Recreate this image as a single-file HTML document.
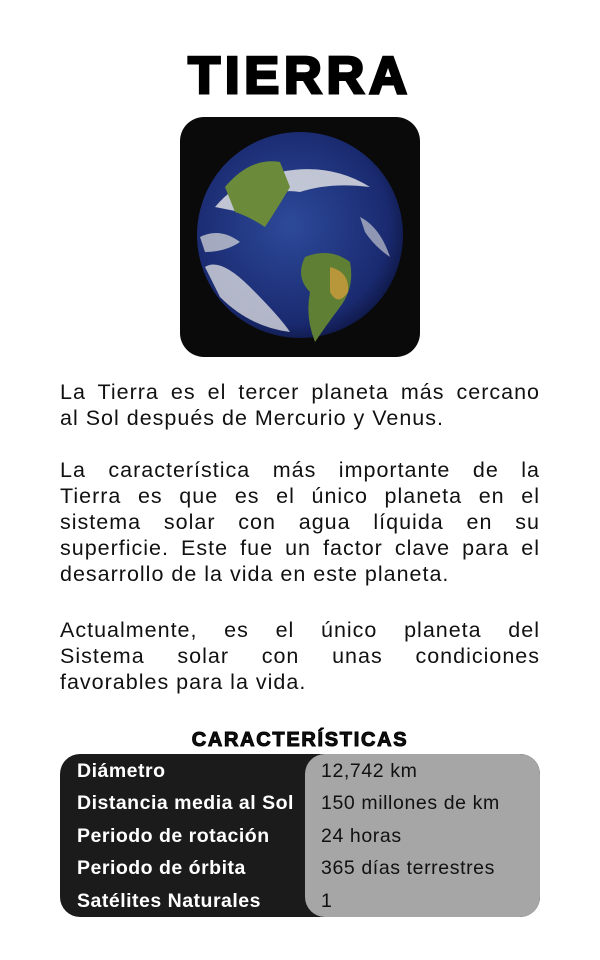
<!DOCTYPE html>
<html><head><meta charset="utf-8"><style>
html,body{margin:0;padding:0;background:#fff;width:600px;height:960px;overflow:hidden}
body{font-family:"Liberation Sans","DejaVu Sans",sans-serif;color:#111;position:relative}
h1{position:absolute;top:46px;left:0;width:600px;text-align:center;margin:0;font-size:52px;font-weight:900;letter-spacing:5px;-webkit-text-stroke:3px #000;color:#000;line-height:60px}
.img{position:absolute;left:180px;top:117px;width:240px;height:240px;background:#0a0a0a;border-radius:24px;overflow:hidden}
.p{position:absolute;left:60px;width:480px;font-size:21.5px;line-height:26px;margin:0;letter-spacing:1px}
.p div{text-align:justify;text-align-last:justify;white-space:nowrap;height:26px}
.p div.l{text-align-last:left}
.h2{position:absolute;top:728px;left:0;width:600px;text-align:center;font-size:20px;font-weight:900;-webkit-text-stroke:1px #000;letter-spacing:1.7px;line-height:24px}
.tbl{position:absolute;left:60px;top:754px;width:480px;height:163px;background:#1b1b1b;border-radius:20px;overflow:hidden}
.gray{position:absolute;left:245px;top:0;width:235px;height:163px;background:#a6a6a6;border-radius:20px}
.row{position:absolute;left:0;width:480px;height:32px;line-height:32px;font-size:19.5px;letter-spacing:0.5px}
.row .k{position:absolute;left:17px;color:#fff;font-weight:bold}
.row .v{position:absolute;left:261px;color:#111;letter-spacing:0.6px}
</style></head><body>
<h1>TIERRA</h1>
<div class="img"><svg width="240" height="240" viewBox="0 0 240 240">
<defs><radialGradient id="g" cx="45%" cy="45%" r="60%"><stop offset="0" stop-color="#2d4a9a"/><stop offset=".8" stop-color="#1a2a70"/><stop offset="1" stop-color="#0c1540"/></radialGradient></defs>
<circle cx="120" cy="118" r="103" fill="url(#g)"/>
<path d="M35 90 Q60 60 100 55 Q150 45 190 70 Q150 65 120 75 Q90 70 60 95Z" fill="#e8e8e8" opacity=".8"/>
<path d="M45 70 Q70 40 100 45 L110 70 Q95 95 85 110 Q70 100 55 95Z" fill="#6b8a3a"/>
<path d="M125 140 Q150 130 170 145 Q175 170 160 190 Q145 210 135 225 Q125 200 130 175 Q115 160 125 140Z" fill="#5f7f35"/>
<path d="M150 150 Q170 155 168 175 Q158 190 150 175Z" fill="#b8963a"/>
<path d="M25 150 Q40 140 70 170 Q100 200 110 215 Q70 210 40 180Z" fill="#e6e6e6" opacity=".75"/>
<path d="M20 120 Q40 110 60 125 Q45 135 25 135Z" fill="#ddd" opacity=".7"/>
<path d="M180 100 Q200 110 210 140 Q195 130 185 115Z" fill="#ddd" opacity=".6"/>
</svg></div>
<div class="p" style="top:379px"><div>La Tierra es el tercer planeta más cercano</div><div class="l">al Sol después de Mercurio y Venus.</div></div>
<div class="p" style="top:457px"><div>La característica más importante de la</div><div>Tierra es que es el único planeta en el</div><div>sistema solar con agua líquida en su</div><div>superficie. Este fue un factor clave para el</div><div class="l">desarrollo de la vida en este planeta.</div></div>
<div class="p" style="top:617px"><div>Actualmente, es el único planeta del</div><div>Sistema solar con unas condiciones</div><div class="l">favorables para la vida.</div></div>
<div class="h2">CARACTERÍSTICAS</div>
<div class="tbl"><div class="gray"></div>
<div class="row" style="top:1px"><span class="k">Diámetro</span><span class="v">12,742 km</span></div>
<div class="row" style="top:33px"><span class="k">Distancia media al Sol</span><span class="v">150 millones de km</span></div>
<div class="row" style="top:66px"><span class="k">Periodo de rotación</span><span class="v">24 horas</span></div>
<div class="row" style="top:98px"><span class="k">Periodo de órbita</span><span class="v">365 días terrestres</span></div>
<div class="row" style="top:131px"><span class="k">Satélites Naturales</span><span class="v">1</span></div>
</div>
</body></html>
